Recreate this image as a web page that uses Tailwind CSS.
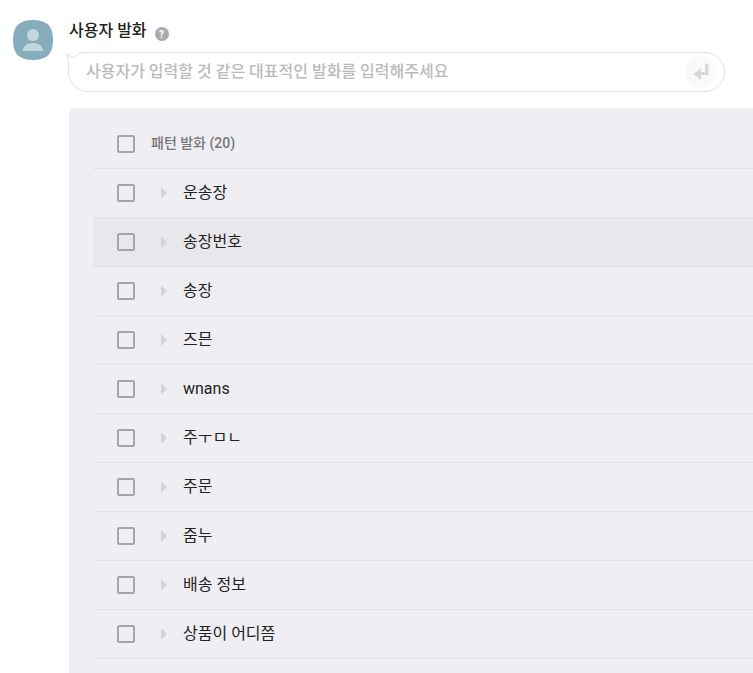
<!DOCTYPE html>
<html lang="ko">
<head>
    <meta charset="UTF-8" />
    <title>사용자 발화</title>
    <script src="https://cdn.jsdelivr.net/npm/@tailwindcss/browser@4"></script>
</head>
<body class="bg-white h-[673px] overflow-hidden font-['Roboto','Noto_Sans_CJK_KR',sans-serif] text-[#222]">

<div class="flex h-full pl-[13px] pt-5">
    <!-- avatar -->
    <svg class="w-10 h-10 shrink-0" viewBox="0 0 40 40">
        <path d="M20 0C34 0 40 6 40 20S34 40 20 40 0 34 0 20 6 0 20 0z" fill="#86adbb" />
        <circle cx="20" cy="15" r="6" fill="#c3d7dd" />
        <path d="M10 31c0-5 4.500-8 10-8s10 3 10 8z" fill="#c3d7dd" />
    </svg>

    <div class="ml-4 flex-1 min-w-0">
        <div class="flex items-center h-[22px]">
            <span class="text-base font-medium leading-[22px]">사용자 발화</span>
            <span class="ml-[8px] mt-[6px] w-[14px] h-[14px] rounded-full bg-[#aaa] text-white text-[10px] font-bold flex items-center justify-center">?</span>
        </div>

        <!-- input bubble -->
        <div class="relative mt-[10px] w-[657px] -ml-px h-10 rounded-[20px] border border-[#e0e0e0] bg-white flex items-center pl-[17px] pr-[7px]">
            <svg class="absolute -left-[4px] -top-px" width="20" height="16" viewBox="0 0 20 16">
                <rect width="19" height="15" fill="#fff" />
                <path d="M19 .5C13 .5 10.500 5.500 7 5.500 5 5.500 3 3 1.500 1 3 5 3.500 9 3.500 15" fill="none" stroke="#e0e0e0" />
            </svg>
            <span class="relative flex-1 text-base font-medium text-[#bbb]">사용자가 입력할 것 같은 대표적인 발화를 입력해주세요</span>
            <span class="w-8 h-8 rounded-full bg-[#f9f9f9] flex items-center justify-center">
                <svg width="16" height="18" viewBox="0 0 16 18">
                    <path d="M12 1h3.500v11H8v5L.5 11 8 5v4h4z" fill="#d8d8dc" />
                </svg>
            </span>
        </div>

        <!-- pattern list -->
        <div class="mt-4 h-[565px] overflow-hidden bg-[#eeeef3] rounded-tl-[4px] pl-6 pt-[11px]">
            <div class="flex items-center h-[50px] border-b border-[#e2e2e6] pl-6">
                <span class="w-[18px] h-[18px] border-2 border-[#a5a5a8] rounded-[2px]"></span>
                <span class="ml-4 mb-[2px] text-sm font-medium text-[#777]">패턴 발화 (20)</span>
            </div>
            <div id="rows">
                <div class="flex items-center h-[49px] border-b border-[#e4e4e8] pl-6">
                    <span class="w-[18px] h-[18px] border-2 border-[#a5a5a8] rounded-[2px]"></span>
                    <span class="ml-[26px] w-0 h-0 border-y-[6px] border-y-transparent border-l-[6px] border-l-[#d4d4d8]"></span>
                    <span class="ml-4 text-base">운송장</span>
                </div>
                <div class="flex items-center h-[49px] border-b border-[#e4e4e8] pl-6 bg-[#e8e8ec]">
                    <span class="w-[18px] h-[18px] border-2 border-[#a5a5a8] rounded-[2px]"></span>
                    <span class="ml-[26px] w-0 h-0 border-y-[6px] border-y-transparent border-l-[6px] border-l-[#d4d4d8]"></span>
                    <span class="ml-4 text-base">송장번호</span>
                </div>
                <div class="flex items-center h-[49px] border-b border-[#e4e4e8] pl-6">
                    <span class="w-[18px] h-[18px] border-2 border-[#a5a5a8] rounded-[2px]"></span>
                    <span class="ml-[26px] w-0 h-0 border-y-[6px] border-y-transparent border-l-[6px] border-l-[#d4d4d8]"></span>
                    <span class="ml-4 text-base">송장</span>
                </div>
                <div class="flex items-center h-[49px] border-b border-[#e4e4e8] pl-6">
                    <span class="w-[18px] h-[18px] border-2 border-[#a5a5a8] rounded-[2px]"></span>
                    <span class="ml-[26px] w-0 h-0 border-y-[6px] border-y-transparent border-l-[6px] border-l-[#d4d4d8]"></span>
                    <span class="ml-4 text-base">즈믄</span>
                </div>
                <div class="flex items-center h-[49px] border-b border-[#e4e4e8] pl-6">
                    <span class="w-[18px] h-[18px] border-2 border-[#a5a5a8] rounded-[2px]"></span>
                    <span class="ml-[26px] w-0 h-0 border-y-[6px] border-y-transparent border-l-[6px] border-l-[#d4d4d8]"></span>
                    <span class="ml-4 text-base">wnans</span>
                </div>
                <div class="flex items-center h-[49px] border-b border-[#e4e4e8] pl-6">
                    <span class="w-[18px] h-[18px] border-2 border-[#a5a5a8] rounded-[2px]"></span>
                    <span class="ml-[26px] w-0 h-0 border-y-[6px] border-y-transparent border-l-[6px] border-l-[#d4d4d8]"></span>
                    <span class="ml-4 text-base">주ㅜㅁㄴ</span>
                </div>
                <div class="flex items-center h-[49px] border-b border-[#e4e4e8] pl-6">
                    <span class="w-[18px] h-[18px] border-2 border-[#a5a5a8] rounded-[2px]"></span>
                    <span class="ml-[26px] w-0 h-0 border-y-[6px] border-y-transparent border-l-[6px] border-l-[#d4d4d8]"></span>
                    <span class="ml-4 text-base">주문</span>
                </div>
                <div class="flex items-center h-[49px] border-b border-[#e4e4e8] pl-6">
                    <span class="w-[18px] h-[18px] border-2 border-[#a5a5a8] rounded-[2px]"></span>
                    <span class="ml-[26px] w-0 h-0 border-y-[6px] border-y-transparent border-l-[6px] border-l-[#d4d4d8]"></span>
                    <span class="ml-4 text-base">줌누</span>
                </div>
                <div class="flex items-center h-[49px] border-b border-[#e4e4e8] pl-6">
                    <span class="w-[18px] h-[18px] border-2 border-[#a5a5a8] rounded-[2px]"></span>
                    <span class="ml-[26px] w-0 h-0 border-y-[6px] border-y-transparent border-l-[6px] border-l-[#d4d4d8]"></span>
                    <span class="ml-4 text-base">배송 정보</span>
                </div>
                <div class="flex items-center h-[49px] border-b border-[#e4e4e8] pl-6">
                    <span class="w-[18px] h-[18px] border-2 border-[#a5a5a8] rounded-[2px]"></span>
                    <span class="ml-[26px] w-0 h-0 border-y-[6px] border-y-transparent border-l-[6px] border-l-[#d4d4d8]"></span>
                    <span class="ml-4 text-base">상품이 어디쯤</span>
                </div>
            </div>
        </div>
    </div>
</div>

</body>
</html>
